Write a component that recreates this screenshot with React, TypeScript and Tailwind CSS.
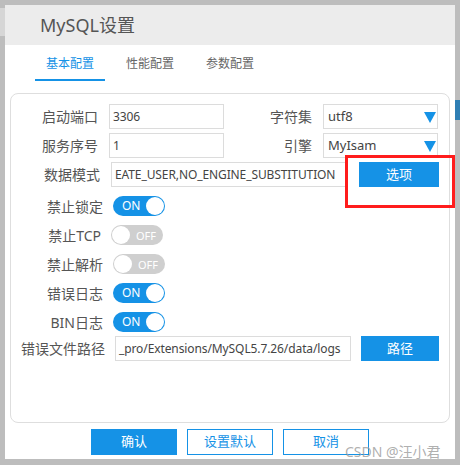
import { type ReactNode } from 'react'

const font = { fontFamily: '"Noto Sans", "Noto Sans CJK SC", sans-serif' }

function Toggle({ on }: { on: boolean }) {
  if (on) {
    return (
      <div className="flex h-[20px] w-[52px] items-center justify-between rounded-full bg-[#1592e6] pl-[9px] pr-[1px]">
        <span className="text-[12px] leading-none text-white">ON</span>
        <span className="h-[18px] w-[18px] rounded-full bg-white" />
      </div>
    )
  }
  return (
    <div className="flex h-[20px] w-[52px] items-center justify-between rounded-full bg-[#cfcfcf] pl-[1px] pr-[7px]">
      <span className="h-[18px] w-[18px] rounded-full bg-white" />
      <span className="text-[11px] leading-none text-white">OFF</span>
    </div>
  )
}

function Field({ value, width }: { value: string; width: string }) {
  return (
    <div
      className={`flex h-[25px] items-center overflow-hidden whitespace-nowrap border border-[#dcdcdc] px-[3px] text-[12px] tracking-[-0.1px] text-[#444] ${width}`}
    >
      {value}
    </div>
  )
}

function Select({ value }: { value: string }) {
  return (
    <div className="flex h-[25px] w-[115px] items-center justify-between border border-[#dcdcdc] pl-[4px] pr-[1px] text-[13px] text-[#444]">
      <span>{value}</span>
      <svg width="12" height="12" viewBox="0 0 12 12">
        <path d="M0 1 L12 1 L6 12 Z" fill="#1592e6" />
      </svg>
    </div>
  )
}

function Label({ children, width }: { children: ReactNode; width: string }) {
  return <div className={`shrink-0 text-right text-[14px] text-[#555] ${width}`}>{children}</div>
}

function ToggleRow({ label, on, labelWidth }: { label: string; on: boolean; labelWidth: string }) {
  return (
    <div className="flex h-[20px] items-center gap-[10px]">
      <Label width={labelWidth}>{label}</Label>
      <Toggle on={on} />
    </div>
  )
}

export default function App() {
  return (
    <div className="relative h-[465px] w-[460px] overflow-hidden bg-[#bdbdbd]" style={font}>
      {/* windows behind the dialog */}
      <div className="absolute left-0 top-[8px] h-[28px] w-[5px] bg-[#d6d6d6]" />
      <div className="absolute right-0 top-[100px] h-[20px] w-[5px] bg-[#2f7fb4]" />

      <div className="absolute left-[5px] top-[5px] flex h-[454px] w-[450px] flex-col bg-white">
        <div className="flex h-[40px] shrink-0 items-center bg-[#ececec] pl-[35px] text-[18px] text-[#555]">
          MySQL设置
        </div>

        <div className="mt-[10px] flex h-[26px] gap-[10px] pl-[30px] text-[12px]">
          <div className="flex w-[70px] justify-center border-b-2 border-[#1592e6] text-[#1592e6]">基本配置</div>
          <div className="flex w-[70px] justify-center text-[#666]">性能配置</div>
          <div className="flex w-[70px] justify-center text-[#666]">参数配置</div>
        </div>

        <div className="relative mx-[5px] mt-[12px] h-[330px] rounded-[8px] border border-[#dedede] pt-[10px]">
          <div className="flex flex-col gap-[4px]">
            <div className="flex items-center">
              <Label width="w-[87px]">启动端口</Label>
              <div className="ml-[11px]">
                <Field value="3306" width="w-[115px]" />
              </div>
              <Label width="w-[88px]">字符集</Label>
              <div className="ml-[11px]">
                <Select value="utf8" />
              </div>
            </div>
            <div className="flex items-center">
              <Label width="w-[87px]">服务序号</Label>
              <div className="ml-[11px]">
                <Field value="1" width="w-[115px]" />
              </div>
              <Label width="w-[88px]">引擎</Label>
              <div className="ml-[11px]">
                <Select value="MyIsam" />
              </div>
            </div>
            <div className="flex items-center">
              <Label width="w-[89px]">数据模式</Label>
              <div className="ml-[11px]">
                <Field value="EATE_USER,NO_ENGINE_SUBSTITUTION" width="w-[235px]" />
              </div>
              <button className="ml-[13px] h-[25px] w-[80px] bg-[#1592e6] text-[13px] text-white">选项</button>
            </div>
          </div>

          <div className="mt-[9px] flex flex-col gap-[9px]">
            <ToggleRow label="禁止锁定" on labelWidth="w-[92px]" />
            <ToggleRow label="禁止TCP" on={false} labelWidth="w-[90px]" />
            <ToggleRow label="禁止解析" on={false} labelWidth="w-[92px]" />
            <ToggleRow label="错误日志" on labelWidth="w-[92px]" />
            <ToggleRow label="BIN日志" on labelWidth="w-[92px]" />
          </div>

          <div className="mt-[4px] flex items-center">
            <Label width="w-[94px]">错误文件路径</Label>
            <div className="ml-[10px]">
              <Field value="_pro/Extensions/MySQL5.7.26/data/logs" width="w-[236px]" />
            </div>
            <button className="ml-[10px] h-[25px] w-[78px] bg-[#1592e6] text-[13px] text-white">路径</button>
          </div>

          <div className="absolute left-[334px] top-[61px] h-[53px] w-[110px] border-[3px] border-[#ff1c1c]" />
        </div>

        <div className="mt-[6px] flex justify-center gap-[10px] text-[13px]">
          <button className="h-[26px] w-[86px] bg-[#1592e6] text-white">确认</button>
          <button className="h-[26px] w-[86px] border border-[#1592e6] text-[#1592e6]">设置默认</button>
          <button className="h-[26px] w-[86px] border border-[#1592e6] text-[#1592e6]">取消</button>
        </div>

        <div className="absolute left-[340px] top-[436px] text-[14px] text-[#9a9a9a]/80">CSDN @汪小君</div>
      </div>
    </div>
  )
}
